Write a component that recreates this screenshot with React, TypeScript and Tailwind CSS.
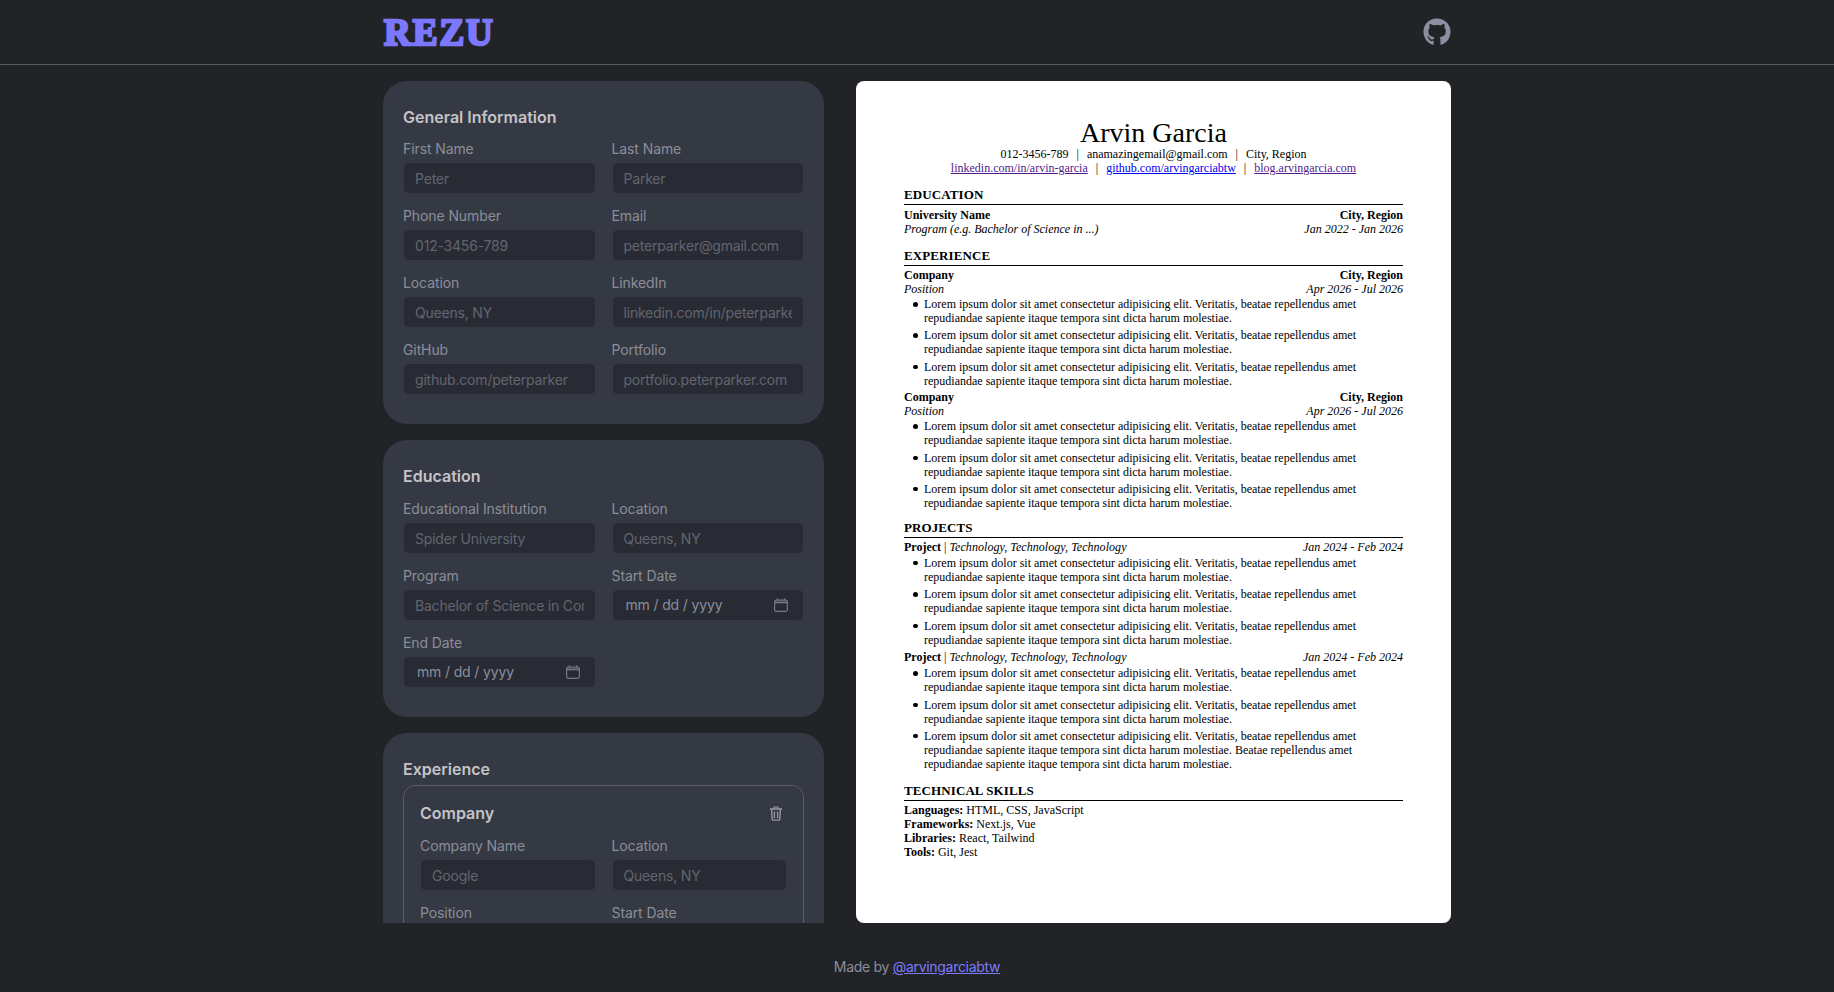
import { FaGithub } from "react-icons/fa";

const fieldClass =
  "h-8 w-full rounded-md border border-[#353943] bg-[#292b34] px-[11px] text-sm tracking-[-0.2px] text-[#8b8e9a] placeholder:text-[#62656f] outline-none";

function Field({ label, placeholder }: { label: string; placeholder?: string }) {
  return (
    <label className="flex min-w-0 flex-col gap-[3px]">
      <span className="text-sm leading-5 tracking-[-0.1px] text-[#8b8e9a]">{label}</span>
      <input type="text" placeholder={placeholder} className={fieldClass} />
    </label>
  );
}

// browser date control, drawn by hand so the "mm / dd / yyyy" spacing matches
function DateField({ label }: { label: string }) {
  return (
    <label className="flex min-w-0 flex-col gap-[3px]">
      <span className="text-sm leading-5 tracking-[-0.1px] text-[#8b8e9a]">{label}</span>
      <div className="flex h-8 w-full items-center justify-between rounded-md border border-[#353943] bg-[#292b34] pr-[15px] pl-[13px] text-sm tracking-[-0.15px] text-[#8b8e9a]">
        <span>mm / dd / yyyy</span>
        <CalendarIcon />
      </div>
    </label>
  );
}

function CalendarIcon() {
  return (
    <svg width="14" height="14" viewBox="0 0 14 14" className="text-[#747784]">
      <rect x="0.6" y="2.1" width="12.8" height="11.3" rx="1.8" fill="none" stroke="currentColor" strokeWidth="1.2" />
      <path d="M1 3.5h12v1.8H1z" fill="currentColor" />
      <path d="M3.5 0.2v2.4M10.5 0.2v2.4" stroke="currentColor" strokeWidth="1.2" />
    </svg>
  );
}

function TrashIcon() {
  return (
    <svg width="12" height="15" viewBox="0 0 12 15" fill="none" stroke="currentColor" className="mr-[5px] text-[#9598a4]">
      <path d="M0 3h12" strokeWidth="1.6" />
      <path d="M4 2.6V1h4v1.6" strokeWidth="1.2" />
      <path d="M1.6 3.5l.6 9.4c0 .7.5 1.2 1.2 1.2h5.2c.7 0 1.2-.5 1.2-1.2l.6-9.4" strokeWidth="1.4" />
      <path d="M4.4 5.5v6.5M7.6 5.5v6.5" strokeWidth="1.3" />
    </svg>
  );
}

function Card({ title, children }: { title: string; children: React.ReactNode }) {
  return (
    <section className="rounded-3xl bg-[#353943] px-5 pt-6 pb-[29px]">
      <h2 className="text-base leading-6 font-semibold text-[#c4c4c8]">{title}</h2>
      {children}
    </section>
  );
}

const lorem = "Lorem ipsum dolor sit amet consectetur adipisicing elit. Veritatis, beatae repellendus amet repudiandae sapiente itaque tempora sint dicta harum molestiae.";

const bulletClass =
  "relative mb-[3.4px] before:absolute before:top-[5px] before:left-[-11px] before:size-[4.5px] before:rounded-full before:bg-black";

function Bullets({ last }: { last?: string }) {
  return (
    <ul className="pr-[46px] pl-5">
      <li className={bulletClass}>{lorem}</li>
      <li className={bulletClass}>{lorem}</li>
      <li className={bulletClass}>{lorem}{last}</li>
    </ul>
  );
}

function ResumeSection({ title, top = "mt-3", children }: { title: string; top?: string; children: React.ReactNode }) {
  return (
    <div className={top}>
      <h3 className="border-b border-black pb-[1px] text-[13px] leading-[16px] font-bold tracking-[0.1px] uppercase">{title}</h3>
      <div className="mt-[2px]">{children}</div>
    </div>
  );
}

function Row({ left, right }: { left: React.ReactNode; right: React.ReactNode }) {
  return (
    <div className="flex justify-between">
      <div>{left}</div>
      <div>{right}</div>
    </div>
  );
}

function Job() {
  return (
    <div className="-mb-[1px]">
      <Row left={<b>Company</b>} right={<b>City, Region</b>} />
      <div className="mb-[1px]">
        <Row left={<i>Position</i>} right={<i>Apr 2026 - Jul 2026</i>} />
      </div>
      <Bullets />
    </div>
  );
}

function Project({ last }: { last?: string }) {
  return (
    <div>
      <div className="mb-[2px]">
        <Row
          left={<><b>Project</b> | <i className="tracking-[0.05px]">Technology, Technology, Technology</i></>}
          right={<i>Jan 2024 - Feb 2024</i>}
        />
      </div>
      <Bullets last={last} />
    </div>
  );
}

function Sep() {
  return <span className="mx-2">|</span>;
}

function Resume() {
  return (
    <div className="h-[842px] w-[595px] shrink-0 rounded-lg bg-white px-12 pt-[37px] font-['Liberation_Serif',serif] text-xs leading-[14px] text-black">
      <h1 className="text-center text-[28px] leading-[29px]">Arvin Garcia</h1>
      <p className="text-center">012-3456-789<Sep />anamazingemail@gmail.com<Sep />City, Region</p>
      <p className="text-center">
        <a className="text-[#551a8b] underline">linkedin.com/in/arvin-garcia</a><Sep />
        <a className="text-[#0000ee] underline">github.com/arvingarciabtw</a><Sep />
        <a className="text-[#551a8b] underline">blog.arvingarcia.com</a>
      </p>
      <ResumeSection title="Education">
        <div className="mt-[3px]">
          <Row left={<b>University Name</b>} right={<b>City, Region</b>} />
          <Row left={<i>Program (e.g. Bachelor of Science in ...)</i>} right={<i>Jan 2022 - Jan 2026</i>} />
        </div>
      </ResumeSection>
      <ResumeSection title="Experience">
        <Job />
        <Job />
      </ResumeSection>
      <ResumeSection title="Projects" top="mt-[11px]">
        <Project />
        <Project last=" Beatae repellendus amet repudiandae sapiente itaque tempora sint dicta harum molestiae." />
      </ResumeSection>
      <ResumeSection title="Technical Skills">
        <p><b>Languages:</b> HTML, CSS, JavaScript</p>
        <p><b>Frameworks:</b> Next.js, Vue</p>
        <p><b>Libraries:</b> React, Tailwind</p>
        <p><b>Tools:</b> Git, Jest</p>
      </ResumeSection>
    </div>
  );
}

export default function App() {
  return (
    <div className="flex h-[992px] flex-col overflow-hidden bg-[#222327] font-['Inter',sans-serif]">
      <header className="h-[65px] shrink-0 border-b border-[#5a5c66]">
        <div className="mx-auto flex h-16 w-[1068px] items-center justify-between">
          <span className="ml-[1px] font-['Liberation_Serif',serif] text-[37px] leading-none font-bold tracking-[2px] text-[#7b78ff] [-webkit-text-stroke:2.5px_#7b78ff]">REZU</span>
          <FaGithub className="text-[28px] text-[#8b90a0]" />
        </div>
      </header>

      <main className="mx-auto mt-4 flex w-[1068px] justify-between">
        <div className="flex h-[842px] w-[441px] flex-col gap-4 overflow-hidden">
          <Card title="General Information">
            <div className="mt-[10px] grid grid-cols-2 gap-x-4 gap-y-3">
              <Field label="First Name" placeholder="Peter" />
              <Field label="Last Name" placeholder="Parker" />
              <Field label="Phone Number" placeholder="012-3456-789" />
              <Field label="Email" placeholder="peterparker@gmail.com" />
              <Field label="Location" placeholder="Queens, NY" />
              <Field label="LinkedIn" placeholder="linkedin.com/in/peterparker" />
              <Field label="GitHub" placeholder="github.com/peterparker" />
              <Field label="Portfolio" placeholder="portfolio.peterparker.com" />
            </div>
          </Card>
          <Card title="Education">
            <div className="mt-[11px] grid grid-cols-2 gap-x-4 gap-y-3">
              <Field label="Educational Institution" placeholder="Spider University" />
              <Field label="Location" placeholder="Queens, NY" />
              <Field label="Program" placeholder="Bachelor of Science in Computer Science" />
              <DateField label="Start Date" />
              <DateField label="End Date" />
            </div>
          </Card>
          <Card title="Experience">
            <div className="mt-1 rounded-xl border border-[#5a5c66] px-4 pt-[15px] pb-5">
              <div className="mb-[11px] flex items-center justify-between">
                <h3 className="text-base leading-6 font-semibold text-[#c4c4c8]">Company</h3>
                <TrashIcon />
              </div>
              <div className="grid grid-cols-2 gap-x-4 gap-y-3">
                <Field label="Company Name" placeholder="Google" />
                <Field label="Location" placeholder="Queens, NY" />
                <Field label="Position" placeholder="Software Engineer" />
                <DateField label="Start Date" />
              </div>
            </div>
          </Card>
        </div>
        <Resume />
      </main>

      <footer className="mt-[34px] text-center text-sm leading-5 tracking-[-0.3px] text-[#8b8e9a]">
        Made by <a className="text-[#7c7cff] underline">@arvingarciabtw</a>
      </footer>
    </div>
  );
}
